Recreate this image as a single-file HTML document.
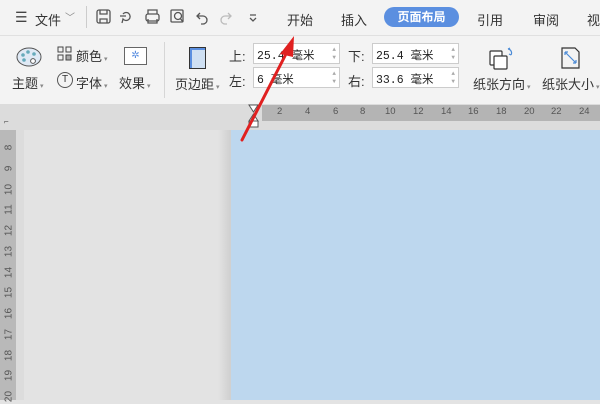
<!DOCTYPE html><html><head><meta charset="utf-8"><style>
*{margin:0;padding:0;box-sizing:border-box}
body{width:600px;height:400px;overflow:hidden;background:#e3e3e3;font-family:"Liberation Sans","Noto Sans CJK SC",sans-serif;position:relative;color:#333}
.a{position:absolute;white-space:nowrap}
.t{font-size:13px}
.inp{position:absolute;background:#fff;border:1px solid #ccc;height:21px;font-family:"Liberation Mono","Noto Sans CJK SC",monospace;font-size:11.5px;padding:3px 3px;color:#222}
.spin{position:absolute;right:3px;top:2px;font-size:6px;color:#aaa;line-height:8px}
.vr{position:absolute;left:2px;font-size:10px;color:#555;transform:rotate(-90deg);width:14px;text-align:center}
.hr{position:absolute;top:106px;font-size:9.5px;color:#555}
</style></head><body>
<div class="a" style="left:0;top:0;width:600px;height:36px;background:#f3f3f3;border-bottom:1px solid #e0e0e0"></div>
<div class="a" style="left:0;top:36px;width:600px;height:68px;background:#f3f3f3"></div>
<div class="a" style="left:0;top:104px;width:600px;height:26px;background:#dcdcdc"></div>
<div class="a" style="left:262px;top:105px;width:338px;height:16px;background:#b4b4b4"></div>
<div class="a" style="left:0;top:130px;width:16px;height:270px;background:#b9b9b9"></div>
<div class="a" style="left:16px;top:130px;width:8px;height:270px;background:#dcdcdc"></div>
<div class="a" style="left:218px;top:130px;width:13px;height:270px;background:linear-gradient(90deg,#e3e3e3,#cfcfcf)"></div>
<div class="a" style="left:231px;top:130px;width:369px;height:270px;background:#bdd7ee"></div>
<div class="a" style="left:4px;top:117px;font-size:8px;color:#555">⌐</div>
<div class="a t" style="left:15px;top:9px;font-size:14px;color:#444">☰</div>
<div class="a t" style="left:35px;top:10px">文件</div>
<div class="a" style="left:65px;top:9px;font-size:10px;color:#888">﹀</div>
<div class="a" style="left:86px;top:6px;width:1px;height:22px;background:#ccc"></div>
<svg class="a" style="left:95px;top:8px" width="170" height="20" fill="none" stroke="#555" stroke-width="1.3">
<rect x="2" y="2" width="13" height="13" rx="2"/><path d="M5 2v4h7V2M5 15v-4h7v4"/>
<path d="M28 6a4 4 0 1 1 0 5l-1 4M25 8h6"/>
<rect x="51" y="6" width="13" height="7" rx="2"/><path d="M53 6V2h9v4M53 11v4h9v-4"/>
<rect x="76" y="2" width="12" height="12" rx="1"/><circle cx="83" cy="8" r="3.5"/><path d="M85 10l3 4"/>
<path d="M105 5l-3 3 3 3M102 8h6a4 4 0 0 1 0 8h-2"/>
<path stroke="#bbb" d="M133 5l3 3-3 3M136 8h-6a4 4 0 0 0 0 8h2"/>
<path d="M155 7h6M155 10l3 3 3-3"/></svg>
<div class="a t" style="left:287px;top:10px">开始</div>
<div class="a t" style="left:341px;top:10px">插入</div>
<div class="a" style="left:384px;top:7px;width:75px;height:20px;border-radius:10px;background:#5b8fe0;color:#fff;font-size:12px;font-weight:bold;text-align:center;line-height:20px">页面布局</div>
<div class="a t" style="left:477px;top:10px">引用</div>
<div class="a t" style="left:533px;top:10px">审阅</div>
<div class="a t" style="left:587px;top:10px">视</div>
<svg class="a" style="left:15px;top:46px" width="28" height="24"><ellipse cx="14" cy="11" rx="12" ry="9" fill="#dfe9f5" stroke="#555"/><circle cx="8" cy="9" r="1.8" fill="#6ab"/><circle cx="13" cy="6" r="1.8" fill="#6ab"/><circle cx="19" cy="8" r="1.8" fill="#6ab"/><circle cx="9" cy="14" r="1.8" fill="#6ab"/><circle cx="18" cy="15" r="2.4" fill="#fff" stroke="#555"/></svg>
<div class="a t" style="left:12px;top:73px">主题<span style="font-size:7px;color:#888"> ▾</span></div>
<svg class="a" style="left:57px;top:46px" width="16" height="16" fill="none" stroke="#444"><rect x="1" y="1" width="5" height="5"/><rect x="9" y="1" width="5" height="5"/><rect x="1" y="9" width="5" height="5"/><rect x="9" y="9" width="5" height="5" fill="#aaa"/></svg>
<div class="a t" style="left:76px;top:46px">颜色<span style="font-size:7px;color:#888"> ▾</span></div>
<div class="a" style="left:57px;top:72px;width:16px;height:16px;border:1px solid #555;border-radius:50%;font-size:10px;text-align:center;line-height:14px">T</div>
<div class="a t" style="left:76px;top:73px">字体<span style="font-size:7px;color:#888"> ▾</span></div>
<div class="a" style="left:124px;top:47px;width:23px;height:18px;border:1px solid #666;background:#fff;color:#5b8fe0;font-size:10px;text-align:center;line-height:16px">✲</div>
<div class="a t" style="left:119px;top:73px">效果<span style="font-size:7px;color:#888"> ▾</span></div>
<div class="a" style="left:164px;top:42px;width:1px;height:56px;background:#d6d6d6"></div>
<div class="a" style="left:189px;top:47px;width:17px;height:22px;border:1.5px solid #333;background:#cfe0f3;box-shadow:inset 2px 2px 0 #5b8fe0"></div>
<div class="a t" style="left:175px;top:74px">页边距<span style="font-size:7px;color:#888"> ▾</span></div>
<div class="a t" style="left:229px;top:46px">上:</div>
<div class="a t" style="left:229px;top:71px">左:</div>
<div class="inp" style="left:253px;top:43px;width:87px">25.4 毫米<span class="spin">▲<br>▼</span></div>
<div class="inp" style="left:253px;top:67px;width:87px">6 毫米<span class="spin">▲<br>▼</span></div>
<div class="a t" style="left:348px;top:46px">下:</div>
<div class="a t" style="left:348px;top:71px">右:</div>
<div class="inp" style="left:372px;top:43px;width:87px">25.4 毫米<span class="spin">▲<br>▼</span></div>
<div class="inp" style="left:372px;top:67px;width:87px">33.6 毫米<span class="spin">▲<br>▼</span></div>
<svg class="a" style="left:488px;top:46px" width="30" height="26" fill="#fff" stroke="#333" stroke-width="1.2"><rect x="2" y="5" width="12" height="14" rx="1"/><rect x="6" y="10" width="13" height="13" rx="1"/><path d="M20 3a4 4 0 0 1 3 6M23 9l-2-1M20 3l2-1" stroke="#4a8ad6" fill="none"/></svg>
<div class="a t" style="left:473px;top:74px">纸张方向<span style="font-size:7px;color:#888"> ▾</span></div>
<svg class="a" style="left:560px;top:46px" width="22" height="24" fill="none" stroke="#333" stroke-width="1.2"><path d="M2 2h13l4 4v16H2z"/><path d="M5 6l11 11M5 6v3M5 6h3M16 17h-3M16 17v-3" stroke="#4a8ad6"/></svg>
<div class="a t" style="left:542px;top:74px">纸张大小<span style="font-size:7px;color:#888"> ▾</span></div>
<div class="hr" style="left:277px">2</div><div class="hr" style="left:305px">4</div><div class="hr" style="left:333px">6</div><div class="hr" style="left:360px">8</div><div class="hr" style="left:385px">10</div><div class="hr" style="left:413px">12</div><div class="hr" style="left:441px">14</div><div class="hr" style="left:468px">16</div><div class="hr" style="left:496px">18</div><div class="hr" style="left:524px">20</div><div class="hr" style="left:551px">22</div><div class="hr" style="left:579px">24</div>
<svg class="a" style="left:248px;top:104px" width="12" height="24" fill="#fff" stroke="#555"><path d="M1 1h9L5.5 8zM5.5 10L1 17h9z"/><rect x="1" y="17" width="9" height="6"/></svg>
<div class="vr" style="top:142px">8</div><div class="vr" style="top:163px">9</div><div class="vr" style="top:184px">10</div><div class="vr" style="top:204px">11</div><div class="vr" style="top:225px">12</div><div class="vr" style="top:246px">13</div><div class="vr" style="top:267px">14</div><div class="vr" style="top:287px">15</div><div class="vr" style="top:308px">16</div><div class="vr" style="top:329px">17</div><div class="vr" style="top:350px">18</div><div class="vr" style="top:370px">19</div><div class="vr" style="top:391px">20</div>
<svg class="a" style="left:0;top:0" width="600" height="400"><path d="M242 140L288 50" stroke="#e02020" stroke-width="3" stroke-linecap="round"/><path d="M294 36L280 54L293 57z" fill="#e02020"/></svg>
</body></html>
